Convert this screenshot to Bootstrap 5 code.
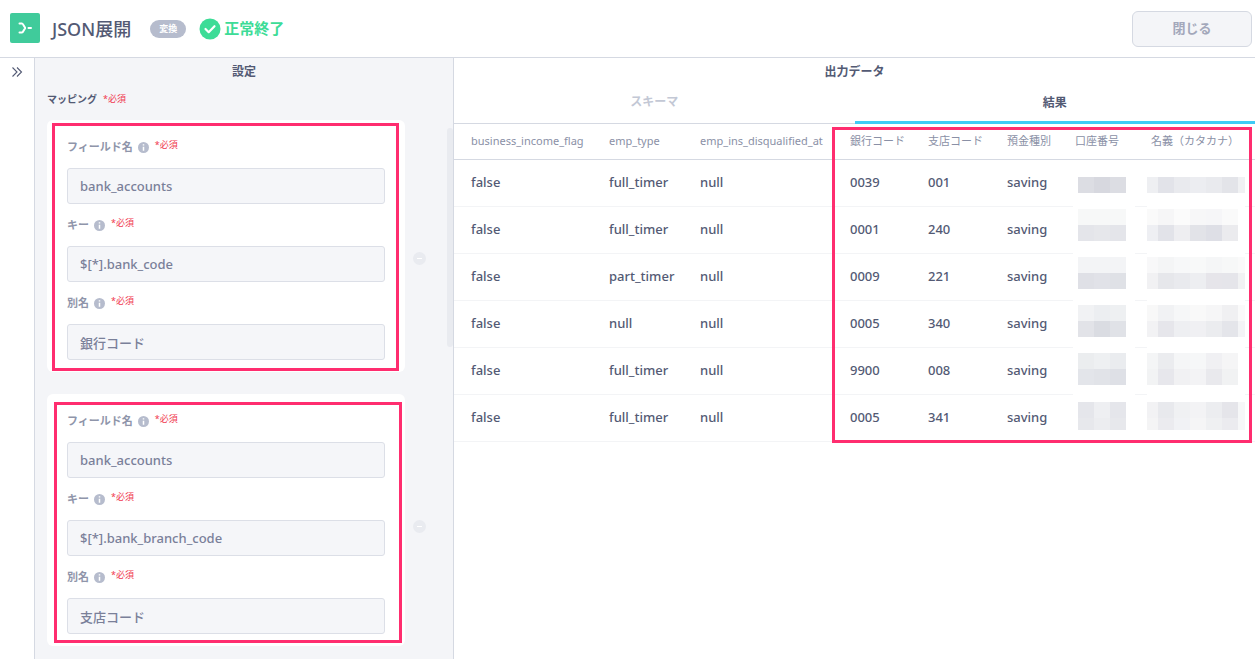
<!DOCTYPE html>
<html lang="ja">
<head>
  <meta charset="UTF-8">
  <title>JSON展開</title>
  <link href="https://cdn.jsdelivr.net/npm/bootstrap@5.3.2/dist/css/bootstrap.min.css" rel="stylesheet">
  <style>
    html, body { height: 100%; overflow: hidden; }
    body { font-family: "Noto Sans", "Noto Sans CJK JP", sans-serif; color: #535a74; background: #fff; }
    .top-bar { height: 58px; border-bottom: 1px solid #d5d9e2; padding: 0 3px 0 10px; }
    .app-logo { width: 30px; height: 30px; background: #40cb9b; border-radius: 2px; margin-right: 12px; margin-top: -2px; }
    .app-title { font-size: 18px; font-weight: 500; margin: 0 19px 0 0; line-height: 1; color: #535a74; }
    .kind-pill { width: 36px; height: 18px; border-radius: 9px; background: #b6bccd; color: #fff; font-size: 9px; font-weight: 700; margin-right: 13px; }
    .status-ok { color: #3ddc97; font-size: 15px; font-weight: 700; gap: 3px; }
    .close-btn { width: 120px; height: 36px; background: #f4f5f8; border: 1px solid #d5d9e2; border-radius: 6px; color: #a3a8bb; font-size: 13px; font-weight: 700; padding: 0; }
    .page-body { height: 601px; }
    .side-rail { width: 35px; border-right: 1px solid #d5d9e2; padding-top: 8px; }
    .settings-pane { width: 419px; background: #f4f5f8; border-right: 1px solid #d5d9e2; overflow: hidden; }
    .pane-title { height: 28px; font-size: 12px; font-weight: 700; color: #535a74; }
    .map-title { height: 26px; padding-left: 12px; font-size: 10px; font-weight: 700; color: #535a74; gap: 6px; margin-bottom: 8px; }
    .req-mark { color: #f0384f; font-size: 9px; font-weight: 400; }
    .map-row { padding-left: 12px; margin-bottom: 22px; }
    .map-card { width: 358px; height: 252px; background: #fff; border-radius: 6px; padding: 17px 20px 0; }
    .field-label { height: 20px; margin-bottom: 11px; font-size: 11px; font-weight: 600; color: #8f95aa; }
    .field-label svg { margin: 0 6px 0 5px; }
    .field-label .req-mark { margin-top: -4px; }
    .field-input.form-control { height: 36px; margin-bottom: 11px; background: #f5f6f9; border: 1px solid #dcdfe7; border-radius: 3px; color: #7a8099; font-size: 13px; font-weight: 500; padding: 0 12px; }
    .remove-dot { width: 13px; height: 13px; border-radius: 50%; background: #e9ebf0; margin-left: 8px; }
    .remove-dot::after { content: ""; display: block; width: 5px; height: 1px; background: #fff; margin: 6px auto 0; }
    .dot-first { margin-top: 132px; }
    .dot-second { margin-top: 126px; }
    .pane-scroll { position: absolute; left: 412px; top: 70px; width: 6px; height: 219px; border-radius: 3px; background: #e9ebf0; }
    .mark-box { position: absolute; border: 3px solid #ff2d6f; pointer-events: none; }
    .mark-a { left: 5px; top: 3px; width: 347px; height: 248px; }
    .mark-b { left: 7px; top: 8px; width: 348px; height: 241px; }
    .mark-c { left: 378px; top: 69px; width: 420px; height: 316px; }
    .tab-head { height: 38px; border-bottom: 1px solid #d5d9e2; }
    .tab-cell { font-size: 12px; font-weight: 700; color: #c3c8d5; flex: 1 1 0; padding-bottom: 5px; }
    .tab-live { color: #535a74; border-bottom: 3px solid #3fcbf5; padding-bottom: 2px; margin-bottom: -1px; height: 38px; }
    .data-table { table-layout: fixed; width: 801px; margin: 0; }
    .data-table th { height: 35px; padding: 0 0 0 17px; font-size: 11px; font-weight: 400; color: #8a90a6; border-bottom: 1px solid #d5d9e2; vertical-align: middle; white-space: nowrap; }
    .data-table td { height: 47px; padding: 0 0 0 17px; font-size: 13px; font-weight: 500; color: #535a74; border-bottom: 1px solid #f3f4f6; vertical-align: middle; position: relative; }
    .blur-cell { position: absolute; display: block; top: 0; height: 48px; background: #fff; }
    .blur-acct { left: 15px; width: 62px; }
    .blur-name { left: 13px; width: 98px; }
  </style>
</head>
<body>

<header class="top-bar d-flex align-items-center">
  <div class="app-logo d-flex align-items-center justify-content-center">
    <svg width="30" height="30" viewBox="0 0 30 30" fill="none" stroke="#fff" stroke-width="2" stroke-linecap="round">
      <path d="M9.5 10.5h2.5c1.5 0 2 4.500 4 4.500c-2 0-2.500 4.500-4 4.500h-2.500M18.500 15h2.500"/>
    </svg>
  </div>
  <h1 class="app-title">JSON展開</h1>
  <span class="kind-pill d-flex align-items-center justify-content-center">変換</span>
  <span class="status-ok d-flex align-items-center">
    <svg width="22" height="22" viewBox="0 0 22 22">
      <circle cx="11" cy="11" r="10.500" fill="#3ddc97"/>
      <path d="M6.500 11l3.200 3.200l5.800-6" fill="none" stroke="#fff" stroke-width="2.200" stroke-linecap="round" stroke-linejoin="round"/>
    </svg>
    正常終了
  </span>
  <button class="close-btn btn ms-auto" type="button">閉じる</button>
</header>

<div class="page-body d-flex position-relative">
  <div class="side-rail d-flex justify-content-center align-items-start">
    <svg width="12" height="12" viewBox="0 0 12 12" fill="none" stroke="#535a74" stroke-width="1.100">
      <path d="M1.500 1.500l4.500 4.500l-4.500 4.500M6 1.500l4.500 4.500l-4.500 4.500"/>
    </svg>
  </div>

  <section class="settings-pane position-relative">
    <div class="pane-title d-flex align-items-center justify-content-center">設定</div>
    <div class="map-title d-flex align-items-center">マッピング <span class="req-mark">*必須</span></div>
    <div class="pane-scroll"></div>
    <div id="map-list"></div>
  </section>

  <section class="flex-grow-1 position-relative">
    <div class="pane-title d-flex align-items-center justify-content-center">出力データ</div>
    <div class="tab-head d-flex">
      <div class="tab-cell d-flex align-items-center justify-content-center">スキーマ</div>
      <div class="tab-cell tab-live d-flex align-items-center justify-content-center">結果</div>
    </div>
    <table class="table data-table">
      <colgroup>
        <col style="width:138px"><col style="width:91px"><col style="width:150px"><col style="width:78px">
        <col style="width:79px"><col style="width:68px"><col style="width:76px"><col style="width:121px">
      </colgroup>
      <thead>
        <tr>
          <th>business_income_flag</th><th>emp_type</th><th>emp_ins_disqualified_at</th><th>銀行コード</th>
          <th>支店コード</th><th>預金種別</th><th>口座番号</th><th>名義（カタカナ）</th>
        </tr>
      </thead>
      <tbody id="result-rows"></tbody>
    </table>
    <div class="mark-box mark-c"></div>
  </section>
</div>

<script>
const mappings = [
  { name: "bank_accounts", key: "$[*].bank_code", alias: "銀行コード", mark: "mark-a", dot: "dot-first" },
  { name: "bank_accounts", key: "$[*].bank_branch_code", alias: "支店コード", mark: "mark-b", dot: "dot-second" }
];

const infoIcon = `<svg width="11" height="11" viewBox="0 0 11 11"><circle cx="5.500" cy="5.500" r="5.500" fill="#b6bccd"/><path d="M5.500 2.300v1.300M5.500 4.800v3.900" stroke="#fff" stroke-width="1.500"/></svg>`;

function fieldHtml(label, value) {
  return `
    <div class="field-label d-flex align-items-center">${label}${infoIcon}<span class="req-mark">*必須</span></div>
    <input class="field-input form-control" type="text" value="${value}" readonly>`;
}

document.getElementById("map-list").innerHTML = mappings.map(m => `
  <div class="map-row d-flex align-items-start">
    <div class="map-card position-relative">
      ${fieldHtml("フィールド名", m.name)}
      ${fieldHtml("キー", m.key)}
      ${fieldHtml("別名", m.alias)}
      <div class="mark-box ${m.mark}"></div>
    </div>
    <div class="remove-dot ${m.dot}"></div>
  </div>`).join("");

// mosaic colours, one array per row of 16px blocks
const rows = [
  { v: ["false", "full_timer", "null", "0039", "001", "saving"], y: 17,
    acct: [["#dcdde3", "#d7d8df", "#dcdde3"]],
    holder: [["#eeeff2", "#e2e3e9", "#e9eaee", "#ecedf1", "#e9eaee", "#e3e4e9", "#f0f1f3"]] },
  { v: ["false", "full_timer", "null", "0001", "240", "saving"], y: 2,
    acct: [["#f7f8f8", "#f7f8f8", "#f7f8f8"], ["#e4e5ea", "#e6e7eb", "#e4e5ea"]],
    holder: [["#fafafa", "#f6f6f7", "#fbfbfb", "#f7f7f8", "#f6f6f8", "#fafafa", "#fff"], ["#eeeff3", "#e2e3e9", "#eeeef1", "#e2e3e8", "#dedfe6", "#ebebee", "#fff"]] },
  { v: ["false", "part_timer", "null", "0009", "221", "saving"], y: 3,
    acct: [["#f3f4f6", "#f3f4f6", "#f3f4f6"], ["#dfe0e6", "#e1e2e8", "#dfe1e6"]],
    holder: [["#f8f8f9", "#f4f5f6", "#f7f8f9", "#f8f9f9", "#f5f6f7", "#f7f8f8", "#fafafa"], ["#f1f1f3", "#e6e7eb", "#e9eaee", "#edeef1", "#e6e5ea", "#e5e5ea", "#f1f2f3"]] },
  { v: ["false", "null", "null", "0005", "340", "saving"], y: 4,
    acct: [["#f1f2f4", "#eceef1", "#eef0f2"], ["#e2e3e8", "#dadce2", "#e0e2e7"]],
    holder: [["#f8f8f8", "#f1f2f4", "#f6f7f8", "#f9f9f9", "#f6f6f7", "#f0f0f2", "#fafafa"], ["#f2f2f4", "#e6e6eb", "#eeeff2", "#f0f0f3", "#ebecef", "#e4e5ea", "#f3f4f6"]] },
  { v: ["false", "full_timer", "null", "9900", "008", "saving"], y: 5,
    acct: [["#ebedef", "#eef0f2", "#eaecef"], ["#e3e5ea", "#e1e3e8", "#dee0e6"]],
    holder: [["#f4f5f6", "#ebecef", "#f5f6f7", "#f6f7f8", "#f0f0f3", "#f5f5f6", "#fff"], ["#f2f3f4", "#e7e7ec", "#f1f1f3", "#f3f3f5", "#e9e9ed", "#f1f2f3", "#fff"]] },
  { v: ["false", "full_timer", "null", "0005", "341", "saving"], y: 7, lastH: 12,
    acct: [["#e5e6eb", "#eeeff2", "#e5e6eb"], ["#e7e8ec", "#ecedf0", "#e7e8ec"]],
    holder: [["#f2f2f4", "#e8e9ed", "#f0f1f3", "#f3f3f5", "#ecedf0", "#e5e5ea", "#f6f7f8"], ["#f4f4f5", "#ebebef", "#f1f2f5", "#f5f5f6", "#eff0f2", "#ebebef", "#f6f7f8"]] }
];

function mosaic(grid, blockX, blockW, r) {
  let out = "";
  grid.forEach((line, i) => {
    const h = (i === grid.length - 1 && r.lastH) ? r.lastH : 16;
    line.forEach((c, j) => {
      out += `<rect x="${blockX[j]}" y="${r.y + i * 16}" width="${blockW[j]}" height="${h}" fill="${c}"/>`;
    });
  });
  return out;
}

document.getElementById("result-rows").innerHTML = rows.map(r => `
  <tr>
    ${r.v.map(t => `<td>${t}</td>`).join("")}
    <td><svg class="blur-cell blur-acct" viewBox="0 0 62 48" width="62" height="48">${mosaic(r.acct, [5, 21, 37], [16, 16, 16], r)}</svg></td>
    <td><svg class="blur-cell blur-name" viewBox="0 0 98 48" width="98" height="48">${mosaic(r.holder, [0, 11, 27, 43, 59, 75, 91], [11, 16, 16, 16, 16, 16, 7], r)}</svg></td>
  </tr>`).join("");
</script>

<script src="https://cdn.jsdelivr.net/npm/bootstrap@5.3.2/dist/js/bootstrap.bundle.min.js"></script>
</body>
</html>
